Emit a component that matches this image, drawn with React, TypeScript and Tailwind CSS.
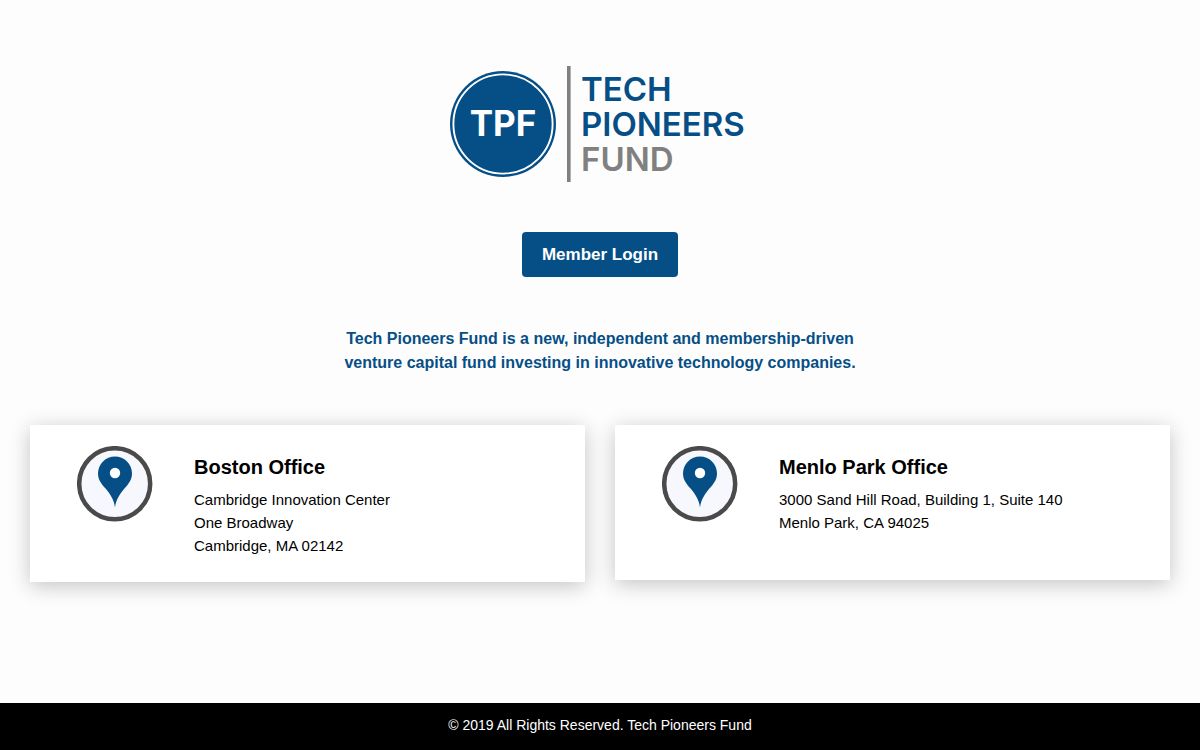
import React from "react";

type Office = { name: string; lines: string[]; height: string };

const offices: Office[] = [
  {
    name: "Boston Office",
    lines: ["Cambridge Innovation Center", "One Broadway", "Cambridge, MA 02142"],
    height: "min-h-[157px]",
  },
  {
    name: "Menlo Park Office",
    lines: ["3000 Sand Hill Road, Building 1, Suite 140", "Menlo Park, CA 94025"],
    height: "min-h-[155px]",
  },
];

function Logo() {
  return (
    <svg
      width="304"
      height="116"
      viewBox="0 0 304 116"
      role="img"
      aria-label="Tech Pioneers Fund"
      className="ml-1 font-['Inter',sans-serif]"
    >
      <circle cx="53" cy="58" r="53" fill="#064f86" />
      <circle cx="53" cy="58" r="49.6" fill="none" stroke="#fff" strokeWidth="1.9" />
      <text x="53" y="70" textAnchor="middle" fontSize="35" fontWeight="700" fill="#fff">
        TPF
      </text>
      <rect x="117" y="0" width="3.6" height="116" fill="#808080" />
      <g fontSize="33" fontWeight="600">
        <text x="131" y="35" fill="#064f86">TECH</text>
        <text x="131" y="70" fill="#064f86">PIONEERS</text>
        <text x="131" y="105" fill="#808080">FUND</text>
      </g>
    </svg>
  );
}

function PinIcon() {
  return (
    <svg width="76" height="76" viewBox="0 0 76 76" aria-hidden="true" className="shrink-0">
      <circle cx="37.7" cy="37.7" r="35.5" fill="#f6f8fd" stroke="#4a4a4a" strokeWidth="4.5" />
      <path
        d="M38 61.5C37.2 54.5 34 49 29 43C24.5 38 21 34 21 27.5A17 17 0 0 1 55 27.5C55 34 51.5 38 47 43C42 49 38.8 54.5 38 61.5Z"
        fill="#064f86"
      />
      <circle cx="38" cy="27" r="5.2" fill="#fff" />
    </svg>
  );
}

function OfficeCard({ office }: { office: Office }) {
  return (
    <section
      className={`flex items-start gap-[41px] bg-white pt-[21px] pr-6 pb-5 pl-[47px] shadow-[0_4px_20px_rgba(0,0,0,0.23)] ${office.height}`}
    >
      <PinIcon />
      <div className="pt-[7px]">
        <h2 className="text-xl leading-7 font-bold">{office.name}</h2>
        <address className="mt-[7px] text-[15px] leading-[23px] not-italic">
          {office.lines.map((line) => (
            <div key={line}>{line}</div>
          ))}
        </address>
      </div>
    </section>
  );
}

export default function App() {
  return (
    <div className="flex min-h-screen flex-col bg-[#fdfdfd] font-['Liberation_Sans',Arial,sans-serif] text-black">
      <main className="flex flex-1 flex-col items-center px-[30px] pt-[66px] pb-10">
        <Logo />
        <a
          href="#login"
          className="mt-[50px] rounded-[4px] bg-[#064f86] px-5 py-[10px] text-[17px] leading-[25px] font-bold text-white"
        >
          Member Login
        </a>
        <p className="mt-[50px] text-center text-base leading-6 font-bold text-[#064f86]">
          Tech Pioneers Fund is a new, independent and membership-driven
          <br />
          venture capital fund investing in innovative technology companies.
        </p>
        <div className="mt-[50px] grid w-full grid-cols-2 items-start gap-[30px]">
          {offices.map((office) => (
            <OfficeCard key={office.name} office={office} />
          ))}
        </div>
      </main>
      <footer className="bg-black px-4 py-3 pb-[14px] text-center text-sm leading-[21px] text-white">
        © 2019 All Rights Reserved. Tech Pioneers Fund
      </footer>
    </div>
  );
}
